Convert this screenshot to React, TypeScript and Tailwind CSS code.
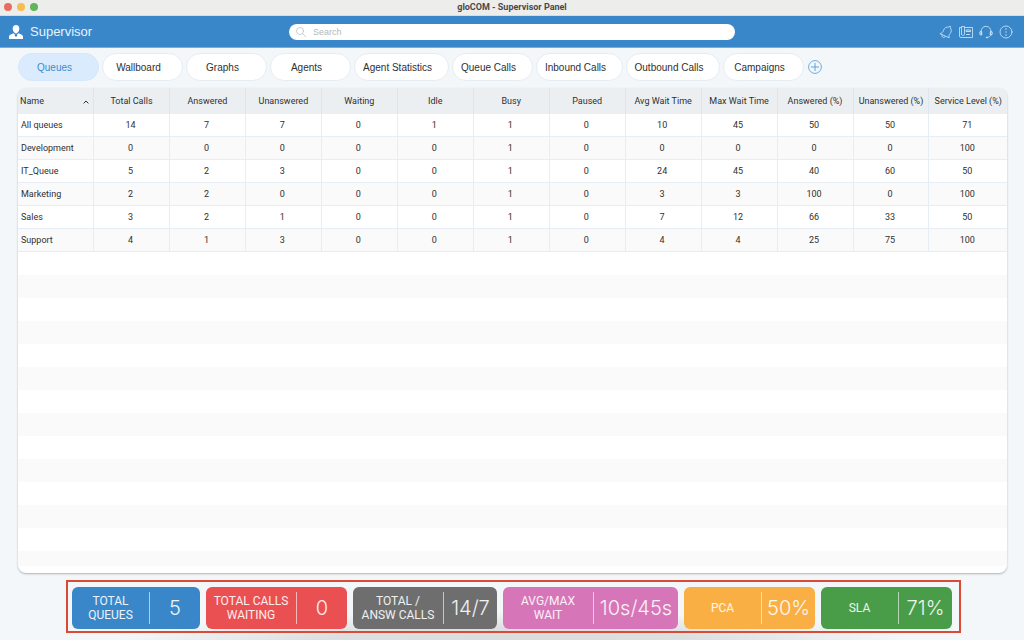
import type { ReactNode } from "react";

const tabs = [
  { label: "Queues", width: "w-[81px]", active: true },
  { label: "Wallboard", width: "w-[81px]" },
  { label: "Graphs", width: "w-[81px]" },
  { label: "Agents", width: "w-[81px]" },
  { label: "Agent Statistics", width: "w-[95px]" },
  { label: "Queue Calls", width: "w-[81px]" },
  { label: "Inbound Calls", width: "w-[87px]" },
  { label: "Outbound Calls", width: "w-[94px]" },
  { label: "Campaigns", width: "w-[81px]" },
];

const columns = [
  "Total Calls",
  "Answered",
  "Unanswered",
  "Waiting",
  "Idle",
  "Busy",
  "Paused",
  "Avg Wait Time",
  "Max Wait Time",
  "Answered (%)",
  "Unanswered (%)",
  "Service Level (%)",
];

const rows: [string, number[]][] = [
  ["All queues", [14, 7, 7, 0, 1, 1, 0, 10, 45, 50, 50, 71]],
  ["Development", [0, 0, 0, 0, 0, 1, 0, 0, 0, 0, 0, 100]],
  ["IT_Queue", [5, 2, 3, 0, 0, 1, 0, 24, 45, 40, 60, 50]],
  ["Marketing", [2, 2, 0, 0, 0, 1, 0, 3, 3, 100, 0, 100]],
  ["Sales", [3, 2, 1, 0, 0, 1, 0, 7, 12, 66, 33, 50]],
  ["Support", [4, 1, 3, 0, 0, 1, 0, 4, 4, 25, 75, 100]],
];

const stats = [
  { lines: ["TOTAL", "QUEUES"], value: "5", color: "bg-[#3987c9]", left: "w-[77px]", right: "w-[51px]" },
  { lines: ["TOTAL CALLS", "WAITING"], value: "0", color: "bg-[#ea4f52]", left: "w-[90px]", right: "w-[51px]" },
  { lines: ["TOTAL /", "ANSW CALLS"], value: "14/7", color: "bg-[#6e6e6e]", left: "w-[90px]", right: "w-[54px]" },
  { lines: ["AVG/MAX", "WAIT"], value: "10s/45s", color: "bg-[#d675b8]", left: "w-[90px]", right: "w-[85px]" },
  { lines: ["PCA"], value: "50%", color: "bg-[#f9af43]", left: "w-[77px]", right: "w-[54px]" },
  { lines: ["SLA"], value: "71%", color: "bg-[#499d49]", left: "w-[77px]", right: "w-[54px]" },
];

function IconButton({ label, children }: { label: string; children: ReactNode }) {
  return (
    <button type="button" aria-label={label} className="flex text-[#c4def3]">
      <svg viewBox="0 0 14 14" className="size-3.5" fill="none" stroke="currentColor" strokeLinecap="round" strokeLinejoin="round">
        {children}
      </svg>
    </button>
  );
}

function TopBar() {
  return (
    <header className="grid h-8 shrink-0 grid-cols-[1fr_446px_1fr] items-center border-b border-[#76aedd] bg-[#3987c9]">
      <div className="flex items-center gap-[7px] pl-[9px]">
        <svg viewBox="0 0 14 14" className="size-3.5 text-white" fill="currentColor" aria-hidden="true">
          <path d="M7 0C4.900 0 3.700 1.400 3.700 3.500c0 1.700.8 3.300 1.700 4.100L7 8.700l1.600-1.100c.9-.8 1.700-2.400 1.700-4.100C10.300 1.400 9.100 0 7 0Z" />
          <path d="M4.600 8.300 1.700 9.400C.5 9.900 0 10.700 0 12v2h14v-2c0-1.300-.5-2.100-1.700-2.600l-2.900-1.100L7.900 9.700l.4 1L7 12l-1.300-1.300.4-1Z" />
        </svg>
        <h1 className="pt-px text-[13px] text-[#e8f3fc]">Supervisor</h1>
      </div>
      <label className="flex h-4 items-center gap-[7px] rounded-full bg-white pl-[7px]">
        <svg viewBox="0 0 10 10" className="size-2.5 shrink-0 text-[#bcc2c7]" fill="none" stroke="currentColor" strokeLinecap="round" aria-hidden="true">
          <circle cx="4" cy="4" r="3.500" strokeWidth=".8" />
          <path d="m6.700 6.700 2.800 2.800" strokeWidth=".8" />
        </svg>
        <input
          type="search"
          aria-label="Search"
          placeholder="Search"
          className="h-4 w-full rounded-full bg-transparent text-[9px] outline-none placeholder:text-[#b4b8bb]"
        />
      </label>
      <div className="flex items-center justify-end gap-1.5 pr-[11px]">
        <IconButton label="Notifications">
          <path strokeWidth=".9" d="M1.300 8.600c1.900-.6 2.700-1.700 3.300-3.400C5.300 2.900 7.400 1.700 9.500 2.100L11.200 1l.2 1.900c1.300 1.800 1.100 4.100-.3 5.700-1.100 1.200-1.300 2.200-1 3.800Z" />
          <path strokeWidth=".9" d="M3.100 10c-.3 1.300.3 2.300 1.300 2.500 1 .2 1.700-.4 1.900-1" />
        </IconButton>
        <IconButton label="News">
          <path strokeWidth=".9" d="M5.500 2.500h8v10H2A1.500 1.500 0 0 1 .5 11V2.500h2M2.500 9.500v-8h3v8c0 1.200-3 1.200-3 0" />
          <path strokeWidth="1" d="M7.500 5h4v1.500h-4zM7.500 9.500h3" />
        </IconButton>
        <IconButton label="Support">
          <path strokeWidth=".9" d="M2 6.500C2 3.500 4.100 1.300 7 1.300s5 2.200 5 5.200M11.900 9.600c-.4 1.600-1.700 2.700-3.600 2.900" />
          <path strokeWidth="1.200" d="M1.700 6.700c-1.200.2-1.200 2.900.2 3.100l.8-.2-.2-2.900ZM12.300 6.700c1.200.2 1.200 2.900-.2 3.100l-.8-.2.2-2.900Z" />
          <path strokeWidth="1.500" d="M7.500 12.400h.8" />
        </IconButton>
        <IconButton label="More">
          <circle cx="7" cy="7" r="6" strokeWidth=".9" />
          <path strokeWidth="1.500" d="M7 4v.1M7 7v.1M7 10v.1" />
        </IconButton>
      </div>
    </header>
  );
}

function Tabs() {
  return (
    <nav aria-label="Views" className="flex h-7 shrink-0 items-center gap-[3px]">
      {tabs.map((tab) => (
        <button
          key={tab.label}
          type="button"
          aria-current={tab.active ? "page" : undefined}
          className={`${tab.width} h-7 rounded-full border pr-2 text-[10px] whitespace-nowrap ${
            tab.active ? "border-[#d5e7fb] bg-[#dbebfe] text-[#3d8bcd]" : "border-[#e5edf4] bg-white text-[#303030]"
          }`}
        >
          {tab.label}
        </button>
      ))}
      <button type="button" aria-label="Add tab" className="ml-px flex text-[#5ea3dc]">
        <svg viewBox="0 0 14 14" className="size-3.5" fill="none" stroke="currentColor">
          <circle cx="7" cy="7" r="6.400" strokeWidth=".9" />
          <path d="M7 3v8M3 7h8" strokeWidth="1" />
        </svg>
      </button>
    </nav>
  );
}

function QueueTable() {
  return (
    <section className="flex flex-1 flex-col overflow-hidden rounded-lg bg-white pb-[7px] shadow-[0_1px_2px_#aeb4b8]">
      <table className="w-full table-fixed border-separate border-spacing-0 font-[Roboto,'Liberation_Sans',sans-serif] text-[9px] text-[#303030]">
        <colgroup>
          <col className="w-[76px]" />
          {columns.slice(0, 11).map((c) => (
            <col key={c} className="w-[7.68%]" />
          ))}
          <col />
        </colgroup>
        <thead>
          <tr className="h-[26px] bg-[#ebeff2]">
            <th scope="col" aria-sort="ascending" className="border-r border-[#dde7f1] p-0 pt-0.5 font-normal">
              <button type="button" className="flex w-full items-center justify-between pr-1 pl-0.5">
                Name
                <svg viewBox="0 0 6 4" className="h-1 w-1.5" fill="none" stroke="currentColor" aria-hidden="true">
                  <path d="M.6 3.400 3 1l2.400 2.400" />
                </svg>
              </button>
            </th>
            {columns.map((c) => (
              <th key={c} scope="col" className="border-r border-[#dde7f1] p-0 pt-0.5 font-normal whitespace-nowrap last:border-r-0">
                {c}
              </th>
            ))}
          </tr>
        </thead>
        <tbody>
          {rows.map(([name, values]) => (
            <tr key={name} className="h-[23px] even:bg-[#fafafa]">
              <th scope="row" className="border-r border-b border-[#e6edf5] p-0 pt-0.5 pl-[3px] text-left font-normal">
                {name}
              </th>
              {values.map((v, i) => (
                <td key={columns[i]} className="border-r border-b border-[#e6edf5] p-0 pt-0.5 pr-0.5 text-center last:border-r-0">
                  {v}
                </td>
              ))}
            </tr>
          ))}
        </tbody>
      </table>
      <div className="flex-1 bg-[repeating-linear-gradient(to_bottom,#fff_0px,#fff_23px,#fafafa_23px,#fafafa_46px)]" />
    </section>
  );
}

function Stats() {
  return (
    <footer className="flex shrink-0 justify-center bg-[radial-gradient(ellipse_400px_32px_at_50%_105%,#d9dcdd,#dde0e1_50%,#f3f7f900)] pt-[7px] pb-[7px] pl-[3px]">
      <div className="flex gap-1.5 border-2 border-[#dc4a35] pt-[5px] pr-[7px] pb-0.5 pl-1">
        {stats.map((s) => (
          <div key={s.value} className={`${s.color} flex h-[42px] items-center rounded-md text-white/90`}>
            <div className={`${s.left} text-center font-[Roboto,'Liberation_Sans',sans-serif] text-[12px] leading-[14px] whitespace-nowrap`}>
              {s.lines.map((l) => (
                <div key={l}>{l}</div>
              ))}
            </div>
            <div
              className={`${s.right} flex h-8 items-center justify-center border-l border-white/60 font-[Inter,'Liberation_Sans',sans-serif] text-[20px] font-light`}
            >
              {s.value}
            </div>
          </div>
        ))}
      </div>
    </footer>
  );
}

export default function App() {
  return (
    <div className="flex min-h-screen flex-col bg-[#f3f7f9] font-['Liberation_Sans',Arial,sans-serif]">
      <div className="grid h-4 shrink-0 grid-cols-[1fr_auto_1fr] items-center border-b border-[#d9dcde] bg-[#ededec]">
        <div className="flex gap-[5px] pb-0.5 pl-1">
          <span className="size-2 rounded-full bg-[#ed6a5f]" />
          <span className="size-2 rounded-full bg-[#f6bd50]" />
          <span className="size-2 rounded-full bg-[#60b558]" />
        </div>
        <div className="pb-0.5 font-[Roboto,'Liberation_Sans',sans-serif] text-[9px] leading-3 font-bold text-[#484848]">
          gloCOM - Supervisor Panel
        </div>
      </div>
      <TopBar />
      <main className="flex flex-1 flex-col gap-[7px] pt-[5px] pr-[17px] pl-[18px]">
        <Tabs />
        <QueueTable />
      </main>
      <Stats />
    </div>
  );
}
